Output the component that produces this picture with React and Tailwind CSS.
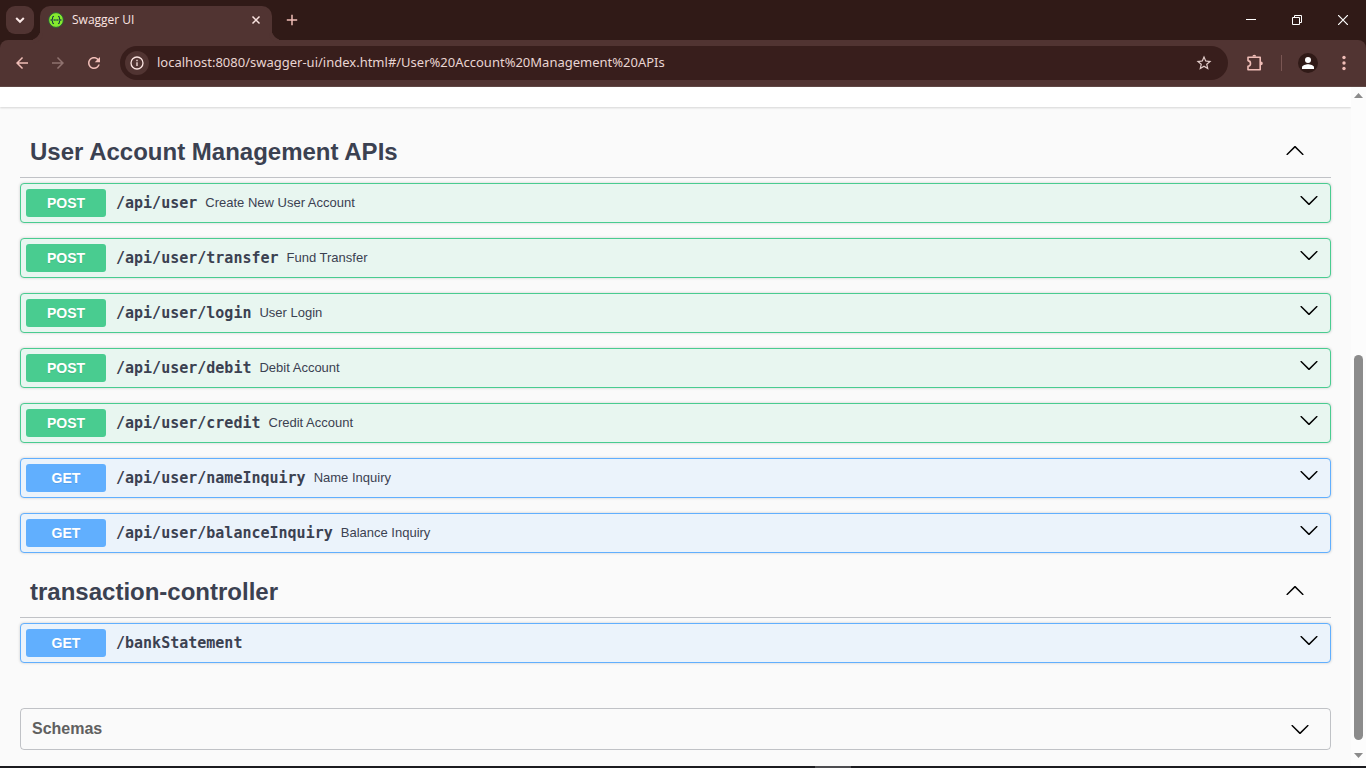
import React from "react";

const userOperations = [
  { method: "POST", path: "/api/user", summary: "Create New User Account" },
  { method: "POST", path: "/api/user/transfer", summary: "Fund Transfer" },
  { method: "POST", path: "/api/user/login", summary: "User Login" },
  { method: "POST", path: "/api/user/debit", summary: "Debit Account" },
  { method: "POST", path: "/api/user/credit", summary: "Credit Account" },
  { method: "GET", path: "/api/user/nameInquiry", summary: "Name Inquiry" },
  { method: "GET", path: "/api/user/balanceInquiry", summary: "Balance Inquiry" },
];

const transactionOperations = [{ method: "GET", path: "/bankStatement", summary: "" }];

const methodStyles = {
  POST: { box: "border-[#49cc90] bg-[#e8f6f0]", badge: "bg-[#49cc90]" },
  GET: { box: "border-[#61affe] bg-[#ebf3fb]", badge: "bg-[#61affe]" },
};

function Chevron({ up = false }) {
  return (
    <svg viewBox="0 0 20 20" className="size-5 shrink-0 fill-black" aria-hidden="true">
      {up ? (
        <path d="M17.418 14.908c.272.268.709.268.979 0s.271-.701 0-.969l-7.908-7.83c-.27-.268-.707-.268-.979 0l-7.908 7.83c-.27.268-.27.701 0 .969.271.268.709.268.979 0L10 7.767l7.418 7.141z" />
      ) : (
        <path d="M17.418 6.109c.272-.268.709-.268.979 0s.271.701 0 .969l-7.908 7.83c-.27.268-.707.268-.979 0l-7.908-7.83c-.27-.268-.27-.701 0-.969.271-.268.709-.268.979 0L10 13.25l7.418-7.141z" />
      )}
    </svg>
  );
}

function Operation({ method, path, summary }) {
  const style = methodStyles[method];
  return (
    <button
      type="button"
      className={`flex h-10 w-full items-center rounded border pl-[5px] pr-[11px] text-left text-[#3b4151] shadow-[0_0_3px_rgba(0,0,0,0.19)] ${style.box}`}
    >
      <span
        className={`flex h-7 w-20 shrink-0 items-center justify-center rounded-[3px] text-sm font-bold text-white [text-shadow:0_1px_0_rgba(0,0,0,0.1)] ${style.badge}`}
      >
        {method}
      </span>
      <span className="pl-2.5 font-['DejaVu_Sans_Mono',monospace] text-[15px] font-bold">{path}</span>
      <span className="grow pl-2 text-[13px]">{summary}</span>
      <span className="pb-1.5">
        <Chevron />
      </span>
    </button>
  );
}

function TagSection({ title, operations }) {
  return (
    <section>
      <h3 className="border-b border-[#3b4151]/30">
        <button
          type="button"
          className="flex h-[49px] w-full items-center justify-between pb-0.5 pl-2.5 pr-[26px] text-left text-2xl font-bold text-[#3b4151]"
        >
          <span>{title}</span>
          <span className="pb-1">
            <Chevron up />
          </span>
        </button>
      </h3>
      <div className="flex flex-col gap-[15px] pt-[5px]">
        {operations.map((op) => (
          <Operation key={op.path} {...op} />
        ))}
      </div>
    </section>
  );
}

function IconButton({ label, className = "", children }) {
  return (
    <button type="button" aria-label={label} className={`flex shrink-0 items-center justify-center ${className}`}>
      {children}
    </button>
  );
}

function TabStrip() {
  return (
    <div className="flex h-10 items-start bg-[#301a17] pl-1.5 pt-1.5">
      <IconButton label="Search tabs" className="size-7 rounded-[9px] bg-[#513432] text-[#fbe9e7]">
        <svg viewBox="0 0 12 12" className="size-3 fill-none stroke-current stroke-2" aria-hidden="true">
          <path d="M2.2 4l3.8 3.8L9.8 4" />
        </svg>
      </IconButton>
      <div className="relative ml-1.5 flex h-[34px] w-58 items-center rounded-t-[10px] bg-[#513432] pb-1.5 pl-2 pr-2">
        <span className="absolute -left-2.5 bottom-0 size-2.5 rounded-br-[10px] shadow-[3px_3px_0_0_#513432]" />
        <span className="absolute -right-2.5 bottom-0 size-2.5 rounded-bl-[10px] shadow-[-3px_3px_0_0_#513432]" />
        <svg viewBox="0 0 16 16" className="size-4" aria-hidden="true">
          <circle cx="8" cy="8" r="7.4" fill="#85ea2d" stroke="#2c5a37" strokeWidth="1" />
          <path
            d="M6 4.2c-1.2 0-1.4.5-1.4 1.5 0 1.2 0 2-1.1 2.3 1.1.3 1.1 1.1 1.1 2.3 0 1 .2 1.5 1.4 1.5M10 4.2c1.2 0 1.4.5 1.4 1.5 0 1.2 0 2 1.1 2.3-1.1.3-1.1 1.1-1.1 2.3 0 1-.2 1.5-1.4 1.5"
            fill="none"
            stroke="#173647"
            strokeWidth="1.1"
          />
          <path d="M5.6 8h4.8" stroke="#173647" strokeWidth="1.3" strokeDasharray="1.2 .6" />
        </svg>
        <span className="grow pl-2 text-xs text-[#fbe4e1]">Swagger UI</span>
        <IconButton label="Close tab" className="size-4 text-[#fbe4e1]">
          <svg viewBox="0 0 16 16" className="size-4 fill-none stroke-current stroke-[1.5]" aria-hidden="true">
            <path d="M4.5 4.5l7 7M11.5 4.5l-7 7" />
          </svg>
        </IconButton>
      </div>
      <IconButton label="New tab" className="ml-1.5 size-7 text-[#f0bdb7]">
        <svg viewBox="0 0 12 12" className="size-3 fill-none stroke-current stroke-[1.5]" aria-hidden="true">
          <path d="M6 .8v10.4M.8 6h10.4" />
        </svg>
      </IconButton>
      <div className="ml-auto flex text-white">
        <IconButton label="Minimize" className="h-7 w-[46px]">
          <svg viewBox="0 0 10 10" className="size-2.5 fill-none stroke-current" aria-hidden="true">
            <path d="M0 4.5h10" />
          </svg>
        </IconButton>
        <IconButton label="Restore" className="h-7 w-[46px]">
          <svg viewBox="0 0 10 10" className="size-2.5 fill-none stroke-current" aria-hidden="true">
            <path d="M.5 2.5h7v7h-7zM2.5 2.5v-2h7v7h-2" />
          </svg>
        </IconButton>
        <IconButton label="Close" className="h-7 w-[46px]">
          <svg viewBox="0 0 10 10" className="size-2.5 fill-none stroke-current stroke-[1.2]" aria-hidden="true">
            <path d="M0 0l10 10M10 0L0 10" />
          </svg>
        </IconButton>
      </div>
    </div>
  );
}

function Toolbar() {
  return (
    <div className="bg-[#301a17]">
      <div className="flex h-[47px] items-center rounded-t-lg border-b border-[#5f4744] bg-[#513432] px-1 text-[#f0bdb7]">
        <IconButton label="Back" className="size-9">
          <svg viewBox="0 0 24 24" className="size-[18px] fill-current" aria-hidden="true">
            <path d="M20 11H7.83l5.59-5.59L12 4l-8 8 8 8 1.41-1.41L7.83 13H20v-2z" />
          </svg>
        </IconButton>
        <IconButton label="Forward" className="size-9 text-[#8f726f]">
          <svg viewBox="0 0 24 24" className="size-[18px] fill-current" aria-hidden="true">
            <path d="M12 4l-1.41 1.41L16.17 11H4v2h12.17l-5.58 5.59L12 20l8-8z" />
          </svg>
        </IconButton>
        <IconButton label="Reload" className="size-9">
          <svg viewBox="0 0 24 24" className="size-[18px] fill-current" aria-hidden="true">
            <path d="M17.65 6.35C16.2 4.9 14.21 4 12 4c-4.42 0-7.99 3.58-7.99 8s3.57 8 7.99 8c3.73 0 6.84-2.55 7.73-6h-2.08c-.82 2.33-3.04 4-5.65 4-3.31 0-6-2.69-6-6s2.69-6 6-6c1.66 0 3.14.69 4.22 1.78L13 11h7V4l-2.35 2.35z" />
          </svg>
        </IconButton>
        <div className="ml-2 mr-[9px] flex h-[34px] grow items-center rounded-full bg-[#381e1c] pl-[5px] pr-[15px] text-[#e3cdca]">
          <IconButton label="View site information" className="size-6 rounded-full bg-[#513432] text-[#fbe4e1]">
            <svg viewBox="0 0 14 14" className="size-3.5 fill-none stroke-current stroke-[1.3]" aria-hidden="true">
              <circle cx="7" cy="7" r="6" />
              <path d="M7 6.3V10M7 3.8v1.4" />
            </svg>
          </IconButton>
          <input
            aria-label="Address"
            readOnly
            value="localhost:8080/swagger-ui/index.html#/User%20Account%20Management%20APIs"
            className="min-w-0 grow bg-transparent px-2 font-['Noto_Sans',sans-serif] text-[13px] text-[#e9d5d2] outline-none"
          />
          <IconButton label="Bookmark this tab" className="size-[18px]">
            <svg viewBox="0 0 24 24" className="size-[18px] fill-current" aria-hidden="true">
              <path d="M22 9.24l-7.19-.62L12 2 9.19 8.63 2 9.24l5.46 4.73L5.82 21 12 17.27 18.18 21l-1.63-7.03L22 9.24zM12 15.4l-3.76 2.27 1-4.28-3.32-2.88 4.38-.38L12 6.1l1.71 4.04 4.38.38-3.32 2.88 1 4.28L12 15.4z" />
            </svg>
          </IconButton>
        </div>
        <IconButton label="Extensions" className="size-9">
          <svg viewBox="0 0 18 18" className="size-[18px] fill-none stroke-current stroke-[1.6]" aria-hidden="true">
            <path d="M2 3.2h12.2v12.5H2v-3.4c1.6-.2 2.5-1.4 2.5-2.85S3.6 6.8 2 6.6z" strokeLinejoin="round" />
            <path d="M6.4 2.6a1.9 1.9 0 0 1 3.8 0zM14.9 7.4a1.9 1.9 0 0 1 0 3.8z" className="fill-current stroke-none" />
          </svg>
        </IconButton>
        <span className="mx-2 h-4 w-px bg-[#7a5653]" />
        <IconButton label="Profile" className="size-9">
          <svg viewBox="0 0 20 20" className="size-5" aria-hidden="true">
            <circle cx="10" cy="10" r="10" fill="#301a17" />
            <circle cx="10" cy="7" r="3" fill="#fff" />
            <path d="M4 16v-1.7c0-2 4-3 6-3s6 1 6 3V16z" fill="#fff" />
          </svg>
        </IconButton>
        <IconButton label="Customize and control" className="size-9">
          <svg viewBox="0 0 4 16" className="h-4 w-1 fill-current" aria-hidden="true">
            <circle cx="2" cy="2.5" r="1.7" />
            <circle cx="2" cy="8" r="1.7" />
            <circle cx="2" cy="13.5" r="1.7" />
          </svg>
        </IconButton>
      </div>
    </div>
  );
}

function ScrollBar() {
  return (
    <div className="flex w-[15px] shrink-0 flex-col items-center bg-[#fcfcfc] pb-2 pt-1.5" aria-hidden="true">
      <svg viewBox="0 0 9 5" className="h-[5px] w-[9px] fill-[#8b8b8b]">
        <path d="M0 5h9L4.5 0z" />
      </svg>
      <span className="flex-[257_1_0%]" />
      <span className="w-[9px] flex-[385_1_0%] rounded-full bg-[#8b8b8b]" />
      <span className="flex-[13_1_0%]" />
      <svg viewBox="0 0 9 5" className="h-[5px] w-[9px] fill-[#8b8b8b]">
        <path d="M0 0h9L4.5 5z" />
      </svg>
    </div>
  );
}

export default function App() {
  return (
    <div className="flex h-screen flex-col overflow-hidden bg-[#fafafa] font-['Liberation_Sans',Arial,sans-serif]">
      <header className="shrink-0 font-['Open_Sans',sans-serif]">
        <TabStrip />
        <Toolbar />
      </header>
      <div className="flex min-h-0 grow">
        <main className="min-w-0 grow overflow-hidden">
          <div className="h-5 bg-white shadow-[0_1px_2px_rgba(0,0,0,0.15)]" />
          <div className="flex flex-col gap-[15px] px-5 pt-[21px]">
            <TagSection title="User Account Management APIs" operations={userOperations} />
            <TagSection title="transaction-controller" operations={transactionOperations} />
            <section className="mt-[30px] rounded border border-[#3b4151]/30">
              <h4>
                <button
                  type="button"
                  className="flex h-10 w-full items-center justify-between pl-[11px] pr-5 text-left text-base font-bold text-[#606060]"
                >
                  Schemas
                  <Chevron />
                </button>
              </h4>
            </section>
          </div>
        </main>
        <ScrollBar />
      </div>
      <footer className="flex h-0.5 shrink-0 justify-center bg-[#1b1b1f]">
        <span className="ml-[300px] w-9 bg-[#4d4d50]" />
      </footer>
    </div>
  );
}
